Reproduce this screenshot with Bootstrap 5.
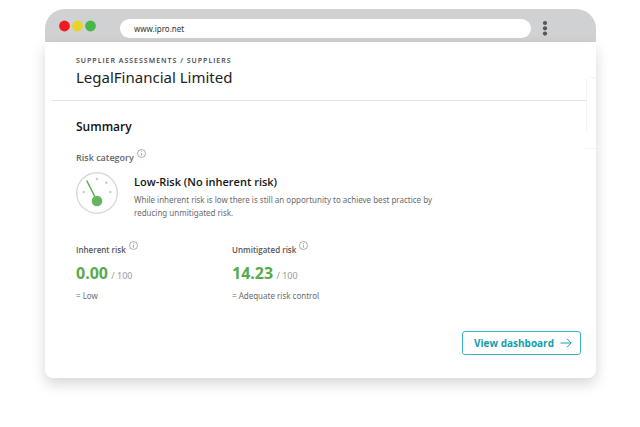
<!DOCTYPE html>
<html lang="en">
<head>
<meta charset="utf-8">
<meta name="viewport" content="width=device-width, initial-scale=1">
<title>LegalFinancial Limited</title>
<link href="https://cdn.jsdelivr.net/npm/bootstrap@5.3.0/dist/css/bootstrap.min.css" rel="stylesheet">
<style>
body { font-family: "Noto Sans", "Open Sans", sans-serif; font-size: 8px; line-height: 13px; color: #6b6b6b; background: #fff; padding: 9px 44px 40px 45px; }
.window-body { border-radius: 0 0 8px 8px; background: #fff; box-shadow: 0 6px 14px rgba(0,0,0,.16); }
.window-bar { height: 33px; background: #d0d1d3; border-radius: 20px 20px 0 0; padding: 0 45px 0 14px; }
.lights { width: 61px; margin-top: 1px; }
.address { height: 19px; font-size: 8px; line-height: 19px; color: #333; background: #fff; border: 0; border-radius: 10px; padding: 0 14px; margin-top: 5px; outline-offset: 1px; }
.page-head { margin: 0 10px 0 7px; padding: 13px 24px 13px; border-bottom: 1px solid #e3e4e5; }
.crumbs { font-family: "Open Sans", sans-serif; font-size: 7px; line-height: 12px; letter-spacing: 1px; font-weight: 600; color: #444; }
.crumbs a { color: inherit; }
.title { font-size: 15px; line-height: 20px; color: #222; font-weight: 400; }
.side-rule { width: 11px; height: 72px; top: 35px; right: 0; }
.page-main { padding: 17px 15px 23px 31px; }
.section-title { font-family: "Open Sans", sans-serif; font-size: 12px; line-height: 18px; font-weight: 600; color: #111; }
.label-text { font-family: "Open Sans", sans-serif; font-size: 9px; line-height: 14px; font-weight: 600; color: #666; margin-top: 15px; }
.small-label { font-family: "Open Sans", sans-serif; font-size: 8px; line-height: 14px; font-weight: 600; color: #555; }
.info { width: 9px; height: 9px; margin: -2px 0 7px 3px; border: 0; padding: 0; background: none; display: inline-flex; }
.category { gap: 16px; margin-top: 7px; }
.category-text { max-width: 320px; padding-top: 1px; }
.category-name { font-family: "Open Sans", sans-serif; font-size: 11px; line-height: 18px; font-weight: 600; color: #151515; margin-bottom: 2px; }
.scores { margin-top: 24px; }
.score-col { width: 156px; flex: none; }
.score { line-height: 22px; margin-top: 6px; color: #999; font-size: 9px; }
.score strong { font-size: 16px; line-height: 20px; font-weight: 700; color: #57ab4c; margin-right: 1px; }
.note { margin-top: 2px; }
.btn-dash { --bs-btn-color: #129eab; --bs-btn-border-color: #3bb6bf; --bs-btn-hover-bg: #129eab; --bs-btn-hover-color: #fff; --bs-btn-border-radius: 3px; font-family: "Open Sans", sans-serif; font-size: 10px; line-height: 14px; font-weight: 700; padding: 4px 8px 4px 11px; gap: 6px; margin-top: 29px; }
</style>
</head>
<body>
<div class="window">
  <header class="window-bar d-flex align-items-center">
    <svg class="lights flex-shrink-0" height="14" viewBox="0 0 61 14" aria-hidden="true"><circle cx="5.5" cy="7" r="5.4" fill="#ed1c24"/><circle cx="18.5" cy="7" r="5.4" fill="#e5d52b"/><circle cx="31.5" cy="7" r="5.4" fill="#48b649"/></svg>
    <input class="address flex-grow-1" type="text" aria-label="Address" value="www.ipro.net">
    <button class="btn border-0 p-0 d-flex ms-2 mt-1" type="button" aria-label="Menu"><svg width="12" height="16" viewBox="0 0 12 16" fill="#55565a"><circle cx="6" cy="3" r="2.1"/><circle cx="6" cy="8.3" r="2.1"/><circle cx="6" cy="13.6" r="2.1"/></svg></button>
  </header>
  <div class="window-body position-relative">
    <svg class="side-rule position-absolute" viewBox="0 0 11 72" fill="none" stroke="#f3f3f3" aria-hidden="true"><path d="M1.5 2v52M5 .5h6M0 71.5h11"/></svg>
    <div class="page-head">
      <nav class="crumbs" aria-label="Breadcrumb"><a class="text-decoration-none" href="#">SUPPLIER ASSESSMENTS</a> / <a class="text-decoration-none" href="#">SUPPLIERS</a></nav>
      <h1 class="title mb-0">LegalFinancial Limited</h1>
    </div>
    <main class="page-main">
      <h2 class="section-title mb-0">Summary</h2>
      <div class="label-text d-flex align-items-center">Risk category
        <button class="info" type="button" aria-label="About risk category"><svg width="9" height="9" viewBox="0 0 9 9" fill="none" stroke="#888" stroke-width=".7"><circle cx="4.5" cy="4.5" r="4"/><path d="M4.5 3.9v2.8M4.5 2.2v.8"/></svg></button></div>
      <div class="category d-flex">
        <svg class="flex-shrink-0" width="42" height="42" viewBox="0 0 42 42" aria-hidden="true"><circle cx="21" cy="21" r="20.3" fill="#fff" stroke="#d9d9d9" stroke-width="1.4"/><g fill="#cfcfcf"><circle cx="21" cy="7" r="1.3"/><circle cx="30.3" cy="10.8" r="1.3"/><circle cx="34.3" cy="20" r="1.3"/><circle cx="7.7" cy="20" r="1.3"/></g><path d="M10.7 8.5 21 29" stroke="#62ae59" stroke-width="1.6"/><circle cx="21" cy="29" r="5.3" fill="#68b35f"/></svg>
        <div class="category-text">
          <h3 class="category-name">Low-Risk (No inherent risk)</h3>
          <p class="mb-0">While inherent risk is low there is still an opportunity to achieve best practice by reducing unmitigated risk.</p>
        </div>
      </div>
      <div class="scores d-flex">
        <div class="score-col">
          <div class="small-label d-flex align-items-center">Inherent risk
            <button class="info" type="button" aria-label="About inherent risk"><svg width="9" height="9" viewBox="0 0 9 9" fill="none" stroke="#888" stroke-width=".7"><circle cx="4.5" cy="4.5" r="4"/><path d="M4.5 3.9v2.8M4.5 2.2v.8"/></svg></button></div>
          <div class="score"><strong>0.00</strong> / 100</div>
          <div class="note">= Low</div>
        </div>
        <div class="score-col">
          <div class="small-label d-flex align-items-center">Unmitigated risk
            <button class="info" type="button" aria-label="About unmitigated risk"><svg width="9" height="9" viewBox="0 0 9 9" fill="none" stroke="#888" stroke-width=".7"><circle cx="4.5" cy="4.5" r="4"/><path d="M4.5 3.9v2.8M4.5 2.2v.8"/></svg></button></div>
          <div class="score"><strong>14.23</strong> / 100</div>
          <div class="note">= Adequate risk control</div>
        </div>
      </div>
      <div class="d-flex justify-content-end">
        <a class="btn btn-dash d-inline-flex align-items-center" href="#">View dashboard
          <svg width="12" height="10" viewBox="0 0 12 10" fill="none" stroke="currentColor" aria-hidden="true"><path d="M.5 5h10.5M7 .8 11.2 5 7 9.2"/></svg></a>
      </div>
    </main>
  </div>
</div>
<script src="https://cdn.jsdelivr.net/npm/bootstrap@5.3.0/dist/js/bootstrap.bundle.min.js"></script>
</body>
</html>
